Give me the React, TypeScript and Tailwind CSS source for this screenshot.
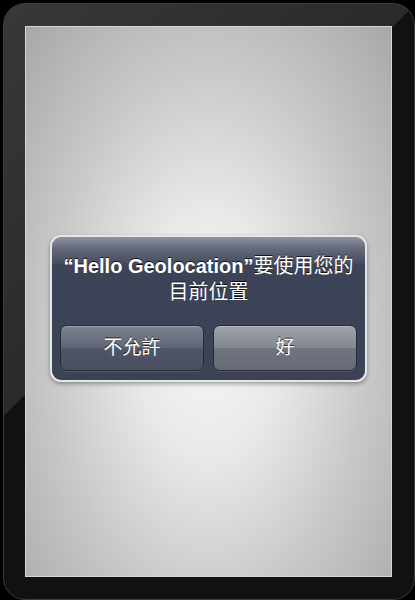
import React from 'react';

const AlertButton = ({ label, light }: { label: string; light?: boolean }) => (
  <button
    className={`flex h-[46px] w-[144px] items-center justify-center rounded-[7px] border border-[#262b38] text-[19px] text-white shadow-[inset_0_1px_0_rgba(255,255,255,0.25),0_1px_0_rgba(255,255,255,0.12)] [text-shadow:0_-1px_0_rgba(0,0,0,0.7)] ${
      light
        ? 'bg-[linear-gradient(to_bottom,#a0a3ac_0%,#83878f_49%,#70747f_51%,#676b77_100%)]'
        : 'bg-[linear-gradient(to_bottom,#7e828f_0%,#616676_49%,#505668_51%,#494f61_100%)]'
    }`}
  >
    {label}
  </button>
);

const App = () => {
  return (
    <div
      className="h-[600px] w-[415px] bg-black pl-[3px] pt-[3px]"
      style={{ fontFamily: '"Liberation Sans", "Noto Sans CJK TC", sans-serif' }}
    >
      {/* Device bezel */}
      <div className="h-[597px] w-[412px] rounded-[22px] border border-[#3c3c3c] bg-[linear-gradient(135deg,#383838_0%,#2a2a2a_40.9%,#111111_41%,#111111_100%)] pl-[21px] pt-[22px]">
        {/* Screen */}
        <div className="flex h-[551px] w-[367px] flex-col items-center border border-[#d6d6d6] bg-[radial-gradient(ellipse_at_50%_56%,#f7f7f7_0%,#e9e9e9_28%,#c8c8c8_62%,#a8a8a8_100%)] pt-[208px]">
          {/* Alert */}
          <div className="w-[317px] rounded-[11px] border-2 border-[#e4e6ea] bg-[linear-gradient(to_bottom,#8f939e_0px,#636979_12px,#474e61_26px,#3d4457_28px,#3b4255_100%)] px-[8px] pb-[9px] pt-[16px] shadow-[0_2px_4px_rgba(0,0,0,0.35)]">
            <div className="text-center text-[20px] leading-[26px] text-white [text-shadow:0_-1px_0_rgba(0,0,0,0.75)]">
              <div>
                <span className="font-bold">“Hello Geolocation”</span>要使用您的
              </div>
              <div>目前位置</div>
            </div>
            <div className="mt-[20px] flex justify-between">
              <AlertButton label="不允許" />
              <AlertButton label="好" light />
            </div>
          </div>
        </div>
      </div>
    </div>
  );
};

export default App;
